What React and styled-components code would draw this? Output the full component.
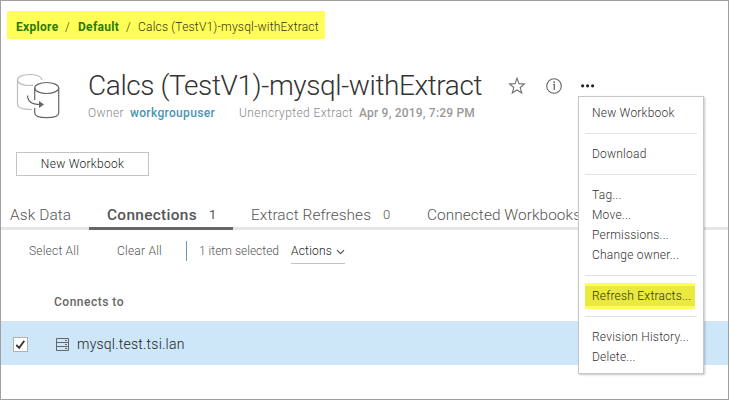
import React from "react";
import styled, { createGlobalStyle } from "styled-components";

const Global = createGlobalStyle`
  *, *::before, *::after { box-sizing: border-box; }
  body { margin: 0; background: #fff; }
`;

const Page = styled.div`
  position: relative;
  display: flex;
  flex-direction: column;
  width: 729px;
  height: 400px;
  overflow: hidden;
  border: 1px solid #a0a0a0;
  background: #fff;
  color: #555;
  font-family: Roboto, "Liberation Sans", sans-serif;
  font-size: 12px;
  font-weight: 300;
`;

const Label = styled.span`
  flex: none;
  width: ${(p) => (p.$w ? `${p.$w}px` : "auto")};
  margin-left: ${(p) => p.$gap || 0}px;
  letter-spacing: ${(p) => p.$track || 0}px;
  white-space: nowrap;
`;

const Breadcrumb = styled.nav`
  display: flex;
  align-items: center;
  width: 318px;
  height: 28px;
  margin: 10px 0 0 6px;
  padding: 3px 0 0 9px;
  background: #ffff57;
  color: #333318;
`;

const Crumb = styled(Label)`
  color: #2c7a06;
  font-weight: 700;
`;

const Header = styled.header`
  display: flex;
  height: 113px;
  padding-left: 15px;
`;

const SourceIcon = styled.svg`
  flex: none;
  width: 44px;
  height: 46px;
  margin-top: 34px;
`;

const Heading = styled.div`
  flex: none;
  width: 420px;
  margin: 28px 0 0 28px;
`;

const Title = styled.h1`
  height: 37px;
  margin: 0;
  color: #333;
  font-size: 28px;
  font-weight: 300;
  line-height: 37px;
  letter-spacing: -0.4px;
  white-space: nowrap;
`;

const Meta = styled.div`
  display: flex;
  height: 18px;
  color: #888;
  line-height: 18px;
`;

const Strong = styled(Label)`
  color: ${(p) => p.$color};
  font-weight: 500;
`;

const HeaderActions = styled.div`
  display: flex;
  align-items: center;
  height: 24px;
  margin-top: 35px;
`;

const Icon = styled.svg`
  flex: none;
  display: block;
  width: ${(p) => p.$w}px;
  height: ${(p) => p.$h || p.$w}px;
  margin-left: ${(p) => p.$gap || 0}px;
`;

const Button = styled.button`
  flex: none;
  width: 133px;
  height: 24px;
  margin: 0 0 0 15px;
  padding: 0;
  border: 1px solid #c4c4c4;
  background: #fff;
  color: #222;
  font: 300 12px Roboto, "Liberation Sans", sans-serif;
  letter-spacing: 0.28px;
`;

const Tabs = styled.div`
  display: flex;
  flex: none;
  height: 28px;
  margin-top: 26px;
  border-bottom: 3px solid #e6e6e6;
`;

const Tab = styled.div`
  display: flex;
  align-items: center;
  flex: none;
  width: ${(p) => p.$w}px;
  height: 28px;
  padding-left: ${(p) => p.$pad}px;
  border-bottom: 3px solid ${(p) => (p.$active ? "#666" : "transparent")};
  color: #555;
  font-size: 15.4px;
  font-weight: ${(p) => (p.$active ? 500 : 300)};
`;

const Count = styled(Label)`
  font-size: 13px;
  font-weight: ${(p) => (p.$bold ? 400 : 300)};
`;

const Toolbar = styled.div`
  display: flex;
  align-items: center;
  flex: none;
  height: 41px;
  padding-left: 28px;
  color: #555;
`;

const Divider = styled.i`
  width: 1px;
  height: 20px;
  background: #6c96b3;
`;

const Actions = styled.div`
  display: flex;
  align-items: center;
  width: 54px;
  height: 26px;
  padding-top: 2px;
  margin-left: 12px;
  border-bottom: 1px solid #c4c4c4;
  color: #222;
`;

const ColumnHead = styled.div`
  display: flex;
  align-items: center;
  flex: none;
  height: 50px;
  padding: 12px 0 0 53px;
  color: #666;
  font-weight: 500;
`;

const Row = styled.div`
  display: flex;
  align-items: center;
  flex: none;
  height: 44px;
  padding: 2px 0 0 12px;
  border-top: 1px solid #dce3e8;
  background: #cde6f8;
  color: #222;
  font-size: 14px;
`;

const HostName = styled(Label)`
  padding-bottom: 2px;
`;

const Checkbox = styled.span`
  display: flex;
  align-items: center;
  justify-content: center;
  width: 15px;
  height: 15px;
  border: 1px solid #b0b0b0;
  background: #fff;
`;

const Menu = styled.div`
  position: absolute;
  top: 95px;
  left: 577px;
  width: 126px;
  height: 278px;
  padding: 6px 6px 0;
  border: 1px solid #c6c6c6;
  background: #fff;
  box-shadow: 1px 1px 2px rgba(0, 0, 0, 0.22);
  color: #333;
`;

const MenuItem = styled.div`
  display: flex;
  align-items: center;
  height: 20px;
  padding-left: 7px;
  letter-spacing: 0.22px;
  white-space: nowrap;
`;

const Rule = styled.div`
  height: 1px;
  margin: 10px 0;
  background: #e2e2e2;
`;

const MarkedItem = styled(MenuItem)`
  width: 110px;
  height: 26px;
  margin: -3px 0;
  border: solid #ffff57;
  border-width: 3px 0;
  background: #e9e93f;
  color: #333311;
`;

const menuGroups = [
  ["New Workbook"],
  ["Download"],
  ["Tag...", "Move...", "Permissions...", "Change owner..."],
  ["Refresh Extracts..."],
  ["Revision History...", "Delete..."],
];

export default function App() {
  return (
    <Page>
      <Global />
      <Breadcrumb>
        <Crumb $w={49} $track={0.3}>Explore</Crumb>
        <Label $w={13}>/</Label>
        <Crumb $w={48} $track={0.3}>Default</Crumb>
        <Label $w={12}>/</Label>
        <Label $track={0.2}>Calcs (TestV1)-mysql-withExtract</Label>
      </Breadcrumb>
      <Header>
        <SourceIcon viewBox="16 73 44 46" fill="none" strokeWidth="1.2">
          <g stroke="#bdbdbd">
            <path d="M42 80C41 76 36 74.5 29.5 74.5C22 74.5 17.5 77 17.5 80S22 85.5 29.5 85.5Q31 85.5 33 85.2" />
            <path d="M17.5 80V104C17.5 107.5 23 109.5 32 109.5" />
          </g>
          <g stroke="#666">
            <ellipse cx="46.7" cy="88" rx="12" ry="5.5" />
            <path d="M34.7 88V100M34.7 108V113C34.7 116.2 40 117.7 46.7 117.7S58.7 116.2 58.7 113V88" />
            <path d="M27.6 95.5C27.6 101.5 32 104.5 40 104.5" />
          </g>
          <path d="M39 101L44 104.5L39 108Z" fill="#666" />
        </SourceIcon>
        <Heading>
          <Title>Calcs (TestV1)-mysql-withExtract</Title>
          <Meta>
            <Label $w={42} $track={0.4}>Owner</Label>
            <Strong $w={109} $track={0.33} $color="#4996b2">workgroupuser</Strong>
            <Label $w={120} $track={0.4}>Unencrypted Extract</Label>
            <Strong $track={0.2} $color="#999">Apr 9, 2019, 7:29 PM</Strong>
          </Meta>
        </Heading>
        <HeaderActions>
          <Icon $w={18} viewBox="0 0 18 18" fill="none" stroke="#707070" strokeWidth="1.1">
            <path d="M9 1.2L11 6.6L16.4 6.9L12.2 10.5L13.7 16L9 13L4.3 16L5.8 10.5L1.6 6.9L7 6.6Z" />
          </Icon>
          <Icon $w={18} $gap={19} viewBox="0 0 18 18" fill="none" stroke="#666" strokeWidth="1.1">
            <circle cx="9" cy="9" r="7.3" />
            <path d="M8.2 7.5H9.3V13" strokeWidth="1.3" />
            <circle cx="9.2" cy="5.1" r=".9" fill="#666" stroke="none" />
          </Icon>
          <Icon $w={16} $gap={16} $h={6} viewBox="0 0 16 6" fill="#222">
            <circle cx="3.6" cy="2.8" r="1.6" />
            <circle cx="8.6" cy="2.8" r="1.6" />
            <circle cx="13.6" cy="2.8" r="1.6" />
          </Icon>
        </HeaderActions>
      </Header>
      <Button>New Workbook</Button>
      <Tabs>
        <Tab $w={88} $pad={9}><Label $track={0.12}>Ask Data</Label></Tab>
        <Tab $w={144} $pad={18} $active><Label $w={102} $track={0.32}>Connections</Label><Count $bold>1</Count></Tab>
        <Tab $w={176} $pad={18}><Label $w={132} $track={0.07}>Extract Refreshes</Label><Count>0</Count></Tab>
        <Tab $w={180} $pad={18}><Label $track={0.07}>Connected Workbooks</Label></Tab>
      </Tabs>
      <Toolbar>
        <Label $w={88} $track={0.2}>Select All</Label>
        <Label $w={69} $track={0.22}>Clear All</Label>
        <Divider />
        <Label $gap={12} $w={80}>1 item selected</Label>
        <Actions>
          <Label $w={45} $track={0.2}>Actions</Label>
          <Icon $w={9} viewBox="0 0 9 9" fill="none" stroke="#555" strokeWidth="1.2">
            <path d="M1 3.2L4.5 6.7L8 3.2" />
          </Icon>
        </Actions>
      </Toolbar>
      <ColumnHead><Label $track={0.5}>Connects to</Label></ColumnHead>
      <Row>
        <Checkbox>
          <Icon $w={11} viewBox="0 0 11 11" fill="none" stroke="#333" strokeWidth="1.8">
            <path d="M1.3 6L4.2 8.8L9.3 1.8" />
          </Icon>
        </Checkbox>
        <Icon $w={14} $gap={28} viewBox="0 0 14 14" fill="none" stroke="#666" strokeWidth="1">
          <path d="M.5.5H12.5V12.5H.5ZM.5 4.5H12.5M.5 8.5H12.5M9 2.5H11M9 6.5H11M9 10.5H11" />
        </Icon>
        <HostName $gap={7} $track={0.22}>mysql.test.tsi.lan</HostName>
      </Row>
      <Menu>
        {menuGroups.map((group, i) => (
          <React.Fragment key={i}>
            {i > 0 && <Rule />}
            {group.map((text) => {
              const Item = text.startsWith("Refresh") ? MarkedItem : MenuItem;
              return <Item key={text}>{text}</Item>;
            })}
          </React.Fragment>
        ))}
      </Menu>
    </Page>
  );
}
